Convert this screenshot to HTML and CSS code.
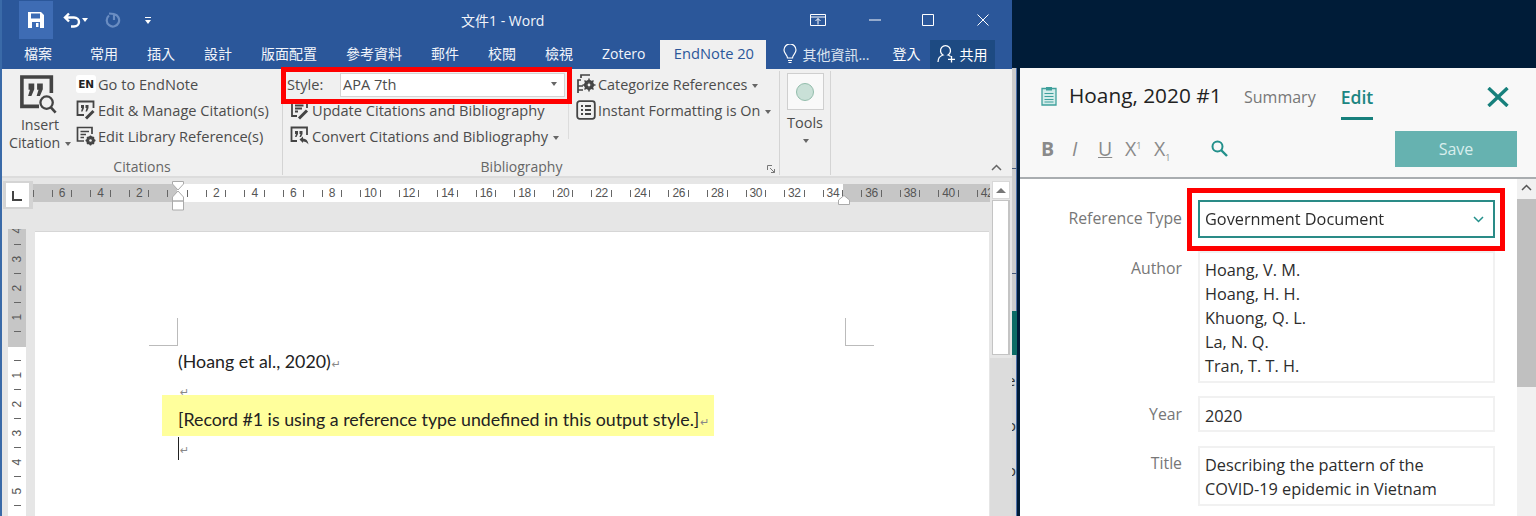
FILE: index.html
```html
<!DOCTYPE html>
<html lang="zh-Hant">
<head>
<meta charset="utf-8">
<title>文件1 - Word</title>
<link rel="stylesheet" href="styles.css">
</head>
<body>
<div class="screen">
  <section class="word">
    <header class="titlebar">
      <div class="qat">
        <span class="qat-save">
          <svg width="16" height="16" viewBox="0 0 16 16"><path class="w-fill" fill-rule="evenodd" d="M0 0H13L16 3V16H0ZM3 1.500V6.500H12V1.500ZM4 10V16H12V10ZM8 11H10.500V15H8Z"/></svg>
        </span>
        <svg class="qat-undo" width="18" height="16" viewBox="0 0 18 16"><path d="M6 1.500 2 5.500 6 9.500M2.500 5.500H11C14 5.500 16 7.500 16 10S14 14.500 11 14.500H8" fill="none" stroke="#fff" stroke-width="2.400"/></svg>
        <i class="caret white qat-c1"></i>
        <svg class="qat-redo" width="16" height="16" viewBox="0 0 16 16"><path d="M4 3.500A6.200 6.200 0 1 0 9 2.200M9 2V8M4 1.500 9 2" fill="none" stroke="#6a8dc2" stroke-width="2.200"/></svg>
        <span class="qat-more"><b></b><i class="caret white"></i></span>
      </div>
      <div class="doc-title">文件1 - Word</div>
      <div class="winctl">
        <svg width="16" height="12" viewBox="0 0 16 12"><path d="M.5.500H15.500V11.500H.5ZM.5 3H15.500M8 10.500V4.500M5.500 7 8 4.500 10.500 7" fill="none" stroke="#fff"/></svg>
        <svg class="wc-min" width="12" height="12" viewBox="0 0 12 12"><path d="M0 6H12" stroke="#fff"/></svg>
        <svg class="wc-max" width="12" height="12" viewBox="0 0 12 12"><path d="M.5.500H11.500V11.500H.5Z" fill="none" stroke="#fff"/></svg>
        <svg class="wc-close" width="12" height="12" viewBox="0 0 12 12"><path d="M.5.500 11.500 11.500M11.500.500 .5 11.500" stroke="#fff"/></svg>
      </div>
    </header>
    <nav class="tabs">
      <span class="tab file">檔案</span>
      <span class="tab">常用</span>
      <span class="tab">插入</span>
      <span class="tab">設計</span>
      <span class="tab">版面配置</span>
      <span class="tab">參考資料</span>
      <span class="tab">郵件</span>
      <span class="tab">校閱</span>
      <span class="tab">檢視</span>
      <span class="tab">Zotero</span>
      <span class="tab active">EndNote 20</span>
      <span class="tell">
        <svg width="14" height="20" viewBox="0 0 14 20"><path d="M4.500 14C4.500 11 1 9.500 1 6A6 6 0 0 1 13 6C13 9.500 9.500 11 9.500 14ZM5 16.500H9M5.500 18.500H8.500" fill="none" stroke="#fff" stroke-width="1.200"/></svg>
        <span>其他資訊...</span>
      </span>
      <span class="signin">登入</span>
      <span class="share">
        <svg width="19" height="19" viewBox="0 0 19 19"><path d="M1 18C1 14 3 12 6 11A5 5 0 1 1 11 11C12 11.300 13 12 13.500 12.500M14.500 12V18.500M11 15.300H18" fill="none" stroke="#fff" stroke-width="1.300"/></svg>
        <span>共用</span>
      </span>
    </nav>

    <div class="ribbon">
      <div class="group g-cit">
        <div class="g-body">
          <div class="big-btn">
            <svg width="38" height="40" viewBox="0 0 40 42"><path d="M33 19V2H2V33H20" fill="none" stroke="#444" stroke-width="3.800"/><path fill="#444" d="M9 9H15V15L12 22H8.500L10.500 15.500H9ZM18 9H24V15L21 22H17.500L19.500 15.500H18Z"/><circle cx="28" cy="29" r="6.500" fill="none" stroke="#444" stroke-width="2.400"/><path d="M32.500 34 37.500 39.500" stroke="#444" stroke-width="2.800"/></svg>
            <span>Insert</span>
            <span>Citation <i class="caret"></i></span>
          </div>
          <div class="list">
            <div class="item"><span class="en-badge">EN</span><span>Go to EndNote</span></div>
            <div class="item">
              <svg class="ico" width="20" height="20" viewBox="0 0 20 20"><path d="M8 15H1.500V1.500H17.500V8" fill="none" stroke="#444" stroke-width="1.800"/><path fill="#444" d="M5 5H8V8L6.500 11.500H5L6 8H5ZM9.500 5H12.500V8L11 11.500H9.500L10.500 8H9.500Z"/><path d="M10 18.500 17.500 11" stroke="#444" stroke-width="3"/></svg>
              <span>Edit &amp; Manage Citation(s)</span>
            </div>
            <div class="item">
              <svg class="ico" width="20" height="20" viewBox="0 0 20 20"><path d="M8 15H1.500V1.500H16V8M4.500 5.500H13M4.500 8.500H10M4.500 11.500H8" fill="none" stroke="#444" stroke-width="1.700"/><circle cx="14.500" cy="14.500" r="3.200" fill="none" stroke="#444" stroke-width="2.400"/><path d="M14.500 9.500V19.500M9.500 14.500H19.500M11 11 18 18M18 11 11 18" stroke="#444" stroke-width="1.400"/><circle cx="14.500" cy="14.500" r="1.300" fill="#f0f0f0"/></svg>
              <span>Edit Library Reference(s)</span>
            </div>
          </div>
        </div>
        <div class="g-label">Citations</div>
      </div>

      <div class="group g-bib">
        <div class="g-body">
          <div class="bib-left">
            <div class="style-row">
              <span class="style-label">Style:</span>
              <span class="style-input"><span>APA 7th</span><i class="caret"></i></span>
            </div>
            <div class="item in">
              <svg class="ico" width="20" height="20" viewBox="0 0 20 20"><path d="M7 16H2V1.500H17V8M5 5.500H13.500M5 8.500H12M5 11.500H8" fill="none" stroke="#444" stroke-width="1.800"/><path d="M9 18.500 17 10.500" stroke="#444" stroke-width="3"/></svg>
              <span>Update Citations and Bibliography</span>
            </div>
            <div class="item in">
              <svg class="ico" width="20" height="20" viewBox="0 0 20 20"><path d="M7 15H1.500V1.500H17V9" fill="none" stroke="#444" stroke-width="1.800"/><path fill="#444" d="M5 5H8V8L6.500 11H5L6 8H5ZM9.500 5H12.500V8L11 11H9.500L10.500 8H9.500Z"/><path d="M9.500 13.500 13 10.500V12.500C16 12.500 18 14.500 18.500 18.500C17 16.500 15.500 15.500 13 15.500V17Z" fill="#444"/></svg>
              <span>Convert Citations and Bibliography <i class="caret"></i></span>
            </div>
          </div>
          <div class="bib-right">
            <div class="item">
              <svg class="ico" width="20" height="20" viewBox="0 0 20 20"><path d="M2 19V6H5M5 4V1H14" fill="none" stroke="#444" stroke-width="1.700"/><path d="M2 12H7M2 16H7" stroke="#444" stroke-width="1.700"/><circle cx="13" cy="11" r="3.700" fill="none" stroke="#444" stroke-width="2.600"/><path d="M13 4.500V17.500M6.500 11H19.500M8.500 6.500 17.500 15.500M17.500 6.500 8.500 15.500" stroke="#444" stroke-width="1.500"/><circle cx="13" cy="11" r="1.400" fill="#f0f0f0"/></svg>
              <span>Categorize References <i class="caret"></i></span>
            </div>
            <div class="item">
              <svg class="ico" width="20" height="20" viewBox="0 0 20 20"><rect x="1.200" y="1.200" width="17.600" height="17.600" rx="2.500" fill="none" stroke="#444" stroke-width="1.800"/><path d="M5 6H7M5 10H7M5 14H7M9 6H15M9 10H15M9 14H15" stroke="#444" stroke-width="2"/></svg>
              <span>Instant Formatting is On <i class="caret"></i></span>
            </div>
          </div>
        </div>
        <div class="g-label bib-label">Bibliography</div>
        <svg class="launcher" width="8" height="8" viewBox="0 0 8 8"><path d="M.5 5V.5H5" fill="none" stroke="#777"/><path d="M3 3 7.500 7.500M7.500 4V7.500H4" fill="none" stroke="#777"/></svg>
      </div>

      <div class="group g-tools">
        <div class="tool-btn"><i class="tool-dot"></i></div>
        <span class="tool-label">Tools</span>
        <i class="caret tool-caret"></i>
      </div>

      <div class="r-end">
        <svg width="11" height="7" viewBox="0 0 11 7"><path d="M1 6 5.500 1.500 10 6" fill="none" stroke="#666" stroke-width="1.500"/></svg>
      </div>
    </div>

    <div class="main">
      <div class="work">
        <div class="ruler-row">
          <div class="tab-sel"><span class="tab-l"></span></div>
          <div class="ruler">
            <div class="rcell lead"><i></i></div>
            <div class="rcell"><i></i><b>6</b><i></i></div>
            <div class="rcell"><i></i><b>4</b><i></i></div>
            <div class="rcell"><i></i><b>2</b><i></i></div>
            <div class="rcell"><i></i><b></b><i></i></div>
            <div class="rcell"><i></i><b>2</b><i></i></div>
            <div class="rcell"><i></i><b>4</b><i></i></div>
            <div class="rcell"><i></i><b>6</b><i></i></div>
            <div class="rcell"><i></i><b>8</b><i></i></div>
            <div class="rcell"><i></i><b>10</b><i></i></div>
            <div class="rcell"><i></i><b>12</b><i></i></div>
            <div class="rcell"><i></i><b>14</b><i></i></div>
            <div class="rcell"><i></i><b>16</b><i></i></div>
            <div class="rcell"><i></i><b>18</b><i></i></div>
            <div class="rcell"><i></i><b>20</b><i></i></div>
            <div class="rcell"><i></i><b>22</b><i></i></div>
            <div class="rcell"><i></i><b>24</b><i></i></div>
            <div class="rcell"><i></i><b>26</b><i></i></div>
            <div class="rcell"><i></i><b>28</b><i></i></div>
            <div class="rcell"><i></i><b>30</b><i></i></div>
            <div class="rcell"><i></i><b>32</b><i></i></div>
            <div class="rcell"><i></i><b>34</b><i></i></div>
            <div class="rcell"><i></i><b>36</b><i></i></div>
            <div class="rcell"><i></i><b>38</b><i></i></div>
            <div class="rcell"><i></i><b>40</b><i></i></div>
            <div class="rcell"><i></i><b>42</b><i></i></div>
          </div>
          <svg class="indent-l" width="12" height="30" viewBox="0 0 12 30"><path d="M.5.500H11.500V3L6 9 .5 3Z M6 10 11.500 16V20H.5V16Z M.5 20H11.500V29H.5Z" fill="#fff" stroke="#aaa"/></svg>
          <svg class="indent-r" width="12" height="10" viewBox="0 0 12 10"><path d="M6 .5 11.500 5V9.500H.5V5Z" fill="#fff" stroke="#aaa"/></svg>
        </div>
        <div class="doc-row">
          <div class="vruler">
            <div class="vstack">
              <b>4</b><i></i><b>3</b><i></i><b>2</b><i></i><b>1</b><i></i><u></u><i></i><b>1</b><i></i><b>2</b><i></i><b>3</b><i></i><b>4</b><i></i><b>5</b><i></i>
            </div>
          </div>
          <div class="page">
            <div class="crops"><span class="crop c-left"></span><span class="crop c-right"></span></div>
            <p class="line first">(Hoang et al., 2020)<span class="pm">↵</span></p>
            <p class="line blank"><span class="pm">↵</span></p>
            <p class="line hl">[Record #1 is using a reference type undefined in this output style.]<span class="pm">↵</span></p>
            <p class="line last"><span class="cursor"></span><span class="pm">↵</span></p>
          </div>
        </div>
      </div>
      <div class="vscroll">
        <div class="vs-up"><i></i></div>
        <div class="vs-thumb"></div>
      </div>
    </div>
    <div class="style-mark"></div>
  </section>

  <div class="behind">
    <div class="b-top"></div>
    <div class="b-seg s1"></div>
    <div class="b-seg s2"></div>
    <div class="b-seg s3"></div>
    <div class="b-teal"></div>
    <div class="b-text"><span>e</span><span>o</span><span>o</span></div>
  </div>

  <aside class="panel">
    <div class="p-head">
      <div class="p-row1">
        <svg class="clip" width="16" height="20" viewBox="0 0 16 20"><path d="M5 2.500H1V19H15V2.500H11" fill="#d3ecea" stroke="#3fa09c" stroke-width="1.300"/><path d="M5 1H11V4.500H5Z" fill="#3fa09c"/><path d="M3.500 7.500H12.500M3.500 10.500H12.500M3.500 13.500H12.500M3.500 16H12.500" stroke="#3fa09c" stroke-width="1.200"/></svg>
        <h1>Hoang, 2020 #1</h1>
        <span class="ptab">Summary</span>
        <span class="ptab on">Edit</span>
        <svg class="p-close" width="22" height="20" viewBox="0 0 22 20"><path d="M1.500 1 20.500 19M20.500 1 1.500 19" stroke="#17807c" stroke-width="3.400"/></svg>
      </div>
      <div class="p-row2">
        <span class="fmt f-b">B</span>
        <span class="fmt f-i">I</span>
        <span class="fmt f-u">U</span>
        <span class="fmt f-x">X<sup>1</sup></span>
        <span class="fmt f-y">X<sub>1</sub></span>
        <svg width="17" height="17" viewBox="0 0 17 17"><circle cx="6.500" cy="6.500" r="5" fill="none" stroke="#23908b" stroke-width="2"/><path d="M10 10 16 16" stroke="#23908b" stroke-width="2.400"/></svg>
        <button class="save">Save</button>
      </div>
    </div>
    <div class="p-body">
      <form class="form">
        <div class="frow r-type">
          <label>Reference Type</label>
          <div class="select">
            <span>Government Document</span>
            <svg width="11" height="7" viewBox="0 0 11 7"><path d="M1 1 5.500 5.500 10 1" fill="none" stroke="#23908b" stroke-width="1.500"/></svg>
          </div>
        </div>
        <div class="frow r-author">
          <label>Author</label>
          <div class="box">Hoang, V. M.<br>Hoang, H. H.<br>Khuong, Q. L.<br>La, N. Q.<br>Tran, T. T. H.</div>
        </div>
        <div class="frow r-year">
          <label>Year</label>
          <div class="box one">2020</div>
        </div>
        <div class="frow r-title">
          <label>Title</label>
          <div class="box">Describing the pattern of the<br>COVID-19 epidemic in Vietnam</div>
        </div>
      </form>
      <div class="p-scroll">
        <svg width="11" height="7" viewBox="0 0 11 7"><path d="M1 6 5.500 1.500 10 6" fill="none" stroke="#555" stroke-width="1.500"/></svg>
        <div class="p-thumb"></div>
      </div>
    </div>
  </aside>
</div>
</body>
</html>
```

FILE: styles.css
```css
* { box-sizing: border-box; }
html, body { margin: 0; padding: 0; }
body { background: #001c38; overflow: hidden; }
p, h1 { margin: 0; }
i { font-style: normal; display: block; }

.screen {
  display: flex;
  width: 1536px;
  height: 516px;
  overflow: hidden;
  font-family: "Open Sans", "Noto Sans CJK TC", sans-serif;
  filter: blur(0.35px);
}

/* ---------- Word window ---------- */
.word {
  position: relative;
  width: 1012px;
  height: 516px;
  flex: none;
  border-left: 2px solid #3a6aa8;
  background: #e6e6e6;
  display: flex;
  flex-direction: column;
}
.titlebar {
  height: 40px;
  flex: none;
  background: #2b579a;
  display: flex;
  align-items: center;
  color: #fff;
  position: relative;
}
.qat { display: flex; align-items: center; padding-left: 17px; width: 459px; height: 40px; }
.qat-save {
  width: 34px; height: 38px; background: #3e6cb4;
  display: flex; align-items: center; justify-content: center;
}
.w-fill { fill: #fff; }
.qat-undo { margin-left: 10px; }
.qat-c1 { margin-left: 8px; }
.qat-redo { margin-left: 17px; }
.qat-more { margin-left: 23px; display: flex; flex-direction: column; gap: 2px; align-items: center; }
.qat-more b { display: block; width: 6px; height: 1px; background: #fff; }
.doc-title { font-size: 14px; width: 349px; color: #f2f5fa; }
.winctl { display: flex; align-items: center; }
.wc-min { margin-left: 43px; }
.wc-max { margin-left: 41px; }
.wc-close { margin-left: 43px; }

.caret {
  display: inline-block;
  width: 0; height: 0;
  border-left: 3.5px solid transparent;
  border-right: 3.5px solid transparent;
  border-top: 4px solid #666;
  vertical-align: 2px;
  margin-left: 1px;
}
.caret.white { border-top-color: #fff; }

.tabs {
  height: 29px;
  flex: none;
  background: #2b579a;
  color: #fff;
  display: flex;
  align-items: center;
  font-size: 14px;
  padding-left: 7.5px;
}
.tab { padding: 0 14.5px; height: 29px; line-height: 27px; white-space: nowrap; color: #f2f5fa; }
.tab.file { margin-right: 9px; }
.tab.active {
  background: #f0f0f0; color: #2b579a;
  padding: 0 0 0 1px; margin-left: 0.5px; width: 106px; text-align: center; font-size: 14.7px;
}
.tell { display: flex; align-items: center; gap: 5px; margin-left: 17px; width: 109px; height: 29px; padding-bottom: 1px; color: #dbe4f0; }
.signin { width: 38px; height: 29px; line-height: 27px; }
.share {
  width: 65px; height: 29px; background: #1d4a82;
  display: flex; align-items: center; gap: 3px; padding: 0 0 2px 7px;
}

/* ---------- Ribbon ---------- */
.ribbon {
  height: 109px;
  flex: none;
  background: #f0f0f0;
  border-bottom: 2px solid #dcdcdc;
  display: flex;
  padding-top: 2px;
  font-size: 14.2px;
  color: #4c4c4c;
}
.group {
  position: relative;
  height: 104px;
  display: flex;
  flex-direction: column;
  border-right: 1px solid #d4d4d4;
}
.g-body { flex: 1; display: flex; min-height: 0; }
.g-label { height: 17px; line-height: 17px; text-align: center; color: #666; font-size: 14px; }
.g-cit { width: 281px; }
.big-btn {
  width: 62px; margin-left: 7px;
  display: flex; flex-direction: column; align-items: center;
  padding-top: 4px;
  line-height: 18px;
}
.big-btn svg { margin-bottom: 1px; margin-left: -2px; }
.big-btn span { white-space: nowrap; }
.list { margin-left: 5px; font-size: 14.6px; }
.item { height: 26px; display: flex; align-items: center; gap: 2px; white-space: nowrap; }
.ico { flex: none; }
.en-badge {
  width: 20px; height: 18px; background: #fff; border-radius: 3px;
  font-family: "DejaVu Sans", sans-serif; font-weight: 700; font-size: 10.5px; color: #222;
  letter-spacing: -0.3px;
  display: flex; align-items: center; justify-content: center;
}

.g-bib { width: 497px; }
.bib-left { width: 285px; padding-left: 4px; font-size: 14.6px; }
.style-row { height: 26px; display: flex; align-items: center; }
.style-label { width: 53px; }
.style-input {
  width: 225px; height: 24px; margin-top: 1px;
  background: #fff; border: 1px solid #d4d4d4;
  display: flex; align-items: center; justify-content: space-between;
  padding: 0 7px 2px 2px;
}
.item.in { padding-left: 3px; }
.bib-right { padding-left: 7px; height: 68px; border-left: 1px solid #dcdcdc; font-size: 14.4px; }
.bib-label { padding-right: 19px; }
.launcher { position: absolute; right: 4px; bottom: 2px; }

.g-tools { width: 51px; align-items: center; }
.tool-btn {
  width: 37px; height: 37px; margin-top: 2px;
  background: #f9f9f9; border: 1px solid #cfcfcf;
  display: flex; align-items: center; justify-content: center;
}
.tool-dot { width: 18px; height: 18px; border-radius: 50%; background: #c9e0d7; border: 1px solid #93bdac; }
.tool-label { margin-top: 4px; line-height: 18px; font-size: 14.5px; }
.tool-caret { margin-top: 7px; }
.r-end { flex: 1; display: flex; justify-content: flex-end; align-items: flex-end; padding: 0 10px 5px 0; }

/* ---------- Document ---------- */
.main { flex: 1; display: flex; min-height: 0; }
.work { width: 988px; flex: none; display: flex; flex-direction: column; }
.ruler-row { height: 53px; flex: none; position: relative; display: flex; align-items: flex-start; }
.tab-sel {
  width: 30px; height: 28px; margin: 3px 0 0 1px;
  background: #d4d4d4; padding: 2px 4px 2px 3px;
  flex: none;
  display: flex;
}
.tab-l { flex: 1; background: #fff; position: relative; display: block; }
.tab-l::after {
  content: ""; position: absolute; left: 6px; top: 8px;
  width: 8px; height: 8px;
  border-left: 2px solid #444; border-bottom: 2px solid #444;
}
.ruler {
  width: 957px; height: 18px; margin-top: 6px; flex: none;
  display: flex; overflow: hidden;
  background: linear-gradient(to right, #c6c6c6 144px, #fff 144px, #fff 810px, #c6c6c6 810px);
  font-family: "Liberation Sans", sans-serif;
  font-size: 12px;
  color: #555;
}
.rcell {
  width: 38.55px; flex: none;
  display: flex; align-items: center; justify-content: space-between;
  padding: 0 9px;
}
.rcell.lead { width: 9.7px; padding: 0; }
.rcell i { width: 1px; height: 7px; background: #666; flex: none; }
.rcell b { font-weight: 400; letter-spacing: -0.4px; }
.indent-l { position: absolute; left: 170px; top: 3px; }
.indent-r { position: absolute; left: 836px; top: 17px; }

.doc-row { flex: 1; display: flex; min-height: 0; }
.vruler {
  width: 18px; margin: -2px 0 0 6px; flex: none;
  background: linear-gradient(to bottom, #c6c6c6 118px, #fff 118px);
  overflow: hidden;
  font-family: "Liberation Sans", sans-serif;
  font-size: 12px;
  color: #555;
}
.vstack { display: flex; flex-direction: column; align-items: center; margin-top: -6.5px; }
.vstack > * { height: 14.5px; flex: none; display: flex; align-items: center; justify-content: center; }
.vstack b { font-weight: 400; transform: rotate(-90deg); }
.vstack i { width: 7px; }
.vstack i::after { content: ""; width: 7px; height: 1px; background: #666; display: block; }
.vstack u { text-decoration: none; }
.page {
  width: 954px; margin-left: 9px; flex: none;
  background: #fff;
  border-top: 1px solid #d6d6d6;
  font-family: Lato, "Open Sans", sans-serif;
  color: #222;
  font-size: 17.8px;
}
.crops { display: flex; margin: 86px 0 0 114px; width: 725px; justify-content: space-between; height: 28px; }
.crop { width: 29px; height: 28px; display: block; }
.c-left { border-right: 1px solid #bbb; border-bottom: 1px solid #bbb; }
.c-right { border-left: 1px solid #bbb; border-bottom: 1px solid #bbb; }
.line { padding-left: 143px; white-space: nowrap; }
.first { height: 28px; line-height: 30px; }
.blank { height: 21px; line-height: 31px; }
.hl {
  margin-left: 127px; width: 552px; height: 41px;
  padding-left: 16px; line-height: 48px;
  background: #ffff9c;
}
.last { height: 24px; display: flex; align-items: center; }
.cursor { width: 1px; height: 23px; background: #222; display: block; }
.pm { font-size: 11px; color: #888; font-family: "DejaVu Sans", sans-serif; margin-left: 1px; }
.blank .pm { padding-left: 1px; }
.last .pm { margin-top: 5px; }

.vscroll {
  flex: 1;
  padding: 3px 2px 0;
  background: linear-gradient(to bottom, #e6e6e6 180px, #dcdcdc 180px);
}
.vs-up {
  height: 18px; background: #fff; border: 1px solid #d8d8d8;
  display: flex; align-items: center; justify-content: center;
}
.vs-up i {
  width: 0; height: 0;
  border-left: 5px solid transparent; border-right: 5px solid transparent;
  border-bottom: 5px solid #777;
}
.vs-thumb { height: 155px; margin-top: 1px; background: #fff; border: 1px solid #c4c4c4; border-right-width: 2px; }
.style-mark {
  position: absolute; left: 279px; top: 67px; width: 291px; height: 37px;
  border: 5px solid #f00;
}

/* ---------- Strip of window behind ---------- */
.behind { width: 8px; flex: none; height: 516px; padding-right: 3px; display: flex; flex-direction: column; }
.b-top { height: 68px; flex: none; }
.b-seg { background: #cccccc; border-bottom: 1px solid #44597a; flex: none; border-right: 1px solid #4b6ea8; }
.s1 { height: 101px; }
.s2 { height: 105px; }
.s3 { height: 37px; border-bottom: 0; }
.b-teal { height: 44px; background: #0b6b66; flex: none; }
.b-text {
  flex: 1; background: #d8d8d8; overflow: hidden;
  border-right: 1px solid #4b6ea8;
  display: flex; flex-direction: column;
  font-size: 15px; line-height: 45px; color: #333;
  text-indent: -5px;
  padding-top: 3px;
}

/* ---------- EndNote panel ---------- */
.panel { flex: none; width: 516px; height: 448px; margin-top: 68px; background: #fff; display: flex; flex-direction: column; }
.p-head { height: 111px; flex: none; background: #f8f8f8; border-bottom: 2px solid #a9adb0; }
.p-row1 { height: 52px; display: flex; align-items: center; padding: 0 27px 0 21px; }
.clip { margin-top: 3px; }
.p-row1 h1 { font-size: 20.8px; font-weight: 400; color: #222; margin: 2px 0 0 12px; width: 175px; white-space: nowrap; }
.ptab { font-size: 16px; color: #777; height: 52px; line-height: 58px; white-space: nowrap; }
.ptab.on { margin-left: 25px; color: #1d8682; font-weight: 600; font-size: 17.6px; border-bottom: 3px solid #17807c; }
.p-close { margin: 6px 0 0 auto; }
.p-row2 { height: 57px; display: flex; align-items: center; padding-left: 21px; color: #8a8a8a; font-size: 19.5px; }
.fmt { display: block; line-height: 24px; white-space: nowrap; }
.fmt sup, .fmt sub { font-size: 9px; line-height: 0; }
.f-b { width: 31px; font-weight: 700; }
.f-i { width: 26px; font-style: italic; }
.f-u { width: 27px; text-decoration: underline; }
.f-x { width: 29px; }
.f-y { width: 57px; }
.save {
  margin-left: auto; margin-right: 19px;
  width: 122px; height: 36px;
  background: #66b2b0; border: 0; color: #d8eeed;
  font: 400 16px "Open Sans", sans-serif;
}
.p-body { flex: 1; display: flex; min-height: 0; }
.form { width: 497px; flex: none; padding-top: 21px; font-size: 16.3px; color: #2c2c2c; }
.frow { display: grid; grid-template-columns: 162px 297px; column-gap: 16px; }
.frow label { text-align: right; color: #777; line-height: 24px; font-size: 15.8px; }
.select {
  position: relative;
  height: 38px; border: 2px solid #2a8b87;
  display: flex; align-items: center; justify-content: space-between;
  padding: 0 9px 0 5px;
}
.select::after {
  content: ""; position: absolute;
  left: -13px; right: -12px; top: -14px; bottom: -15px;
  border: 5px solid #f00;
}
.r-type label { padding-top: 6px; }
.box {
  border: 2px solid #f1f1f1;
  padding: 5px 5px 3px;
  line-height: 24px;
}
.box.one { height: 36px; padding-top: 6px; }
.r-author { margin-top: 13px; }
.r-author label { padding-top: 5px; }
.r-year { margin-top: 13px; }
.r-year label { padding-top: 6px; }
.r-title { margin-top: 14px; }
.r-title label { padding-top: 5px; }
.p-scroll {
  flex: 1; background: #f1f1f1;
  display: flex; flex-direction: column; align-items: center;
  padding-top: 5px;
}
.p-thumb { align-self: stretch; height: 188px; margin-top: 8px; background: #c0c0c0; }
```
